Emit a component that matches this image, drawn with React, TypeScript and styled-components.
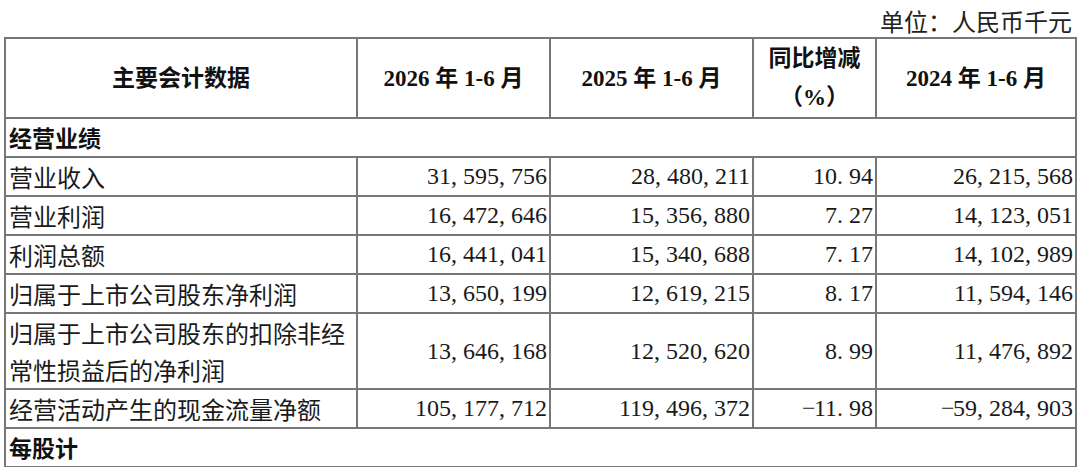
import React from "react";
import styled, { createGlobalStyle } from "styled-components";

const Global = createGlobalStyle`
  html, body { margin: 0; padding: 0; background: #fff; overflow: hidden; }
  body { font-family: "Noto Sans CJK SC", sans-serif; color: #111; }
`;

const Page = styled.div`
  width: 1071px;
  margin-left: 4px;
`;

const Unit = styled.div`
  padding-top: 5px;
  height: 32px;
  line-height: 32px;
  text-align: right;
  padding-right: 3px;
  font-size: 24px;
  color: #222;
  font-family: "Noto Sans CJK SC", sans-serif;
`;

const Table = styled.table`
  width: 1071px;
  table-layout: fixed;
  border-collapse: collapse;
  border: 2px solid #777;
`;

const HeadCell = styled.th`
  border: 2px solid #777;
  height: 78px;
  padding: 0;
  text-align: center;
  vertical-align: middle;
  font-size: 23px;
  font-weight: 700;
  line-height: 39px;
  font-family: "Liberation Serif", "Noto Sans CJK SC", serif;
  color: #111;
`;

const SectionCell = styled.td`
  border: 2px solid #777;
  padding: 0 0 0 3px;
  height: 37px;
  line-height: 37px;
  font-size: 23px;
  font-weight: 700;
  font-family: "Noto Sans CJK SC", sans-serif;
`;

const LabelCell = styled.td`
  border: 2px solid #777;
  padding: 0 0 0 3px;
  height: 37px;
  line-height: 37px;
  font-size: 24px;
  font-weight: 400;
  vertical-align: middle;
  font-family: "Noto Sans CJK SC", sans-serif;
  white-space: pre-line;
  color: #1a1a1a;
`;

const NumCell = styled.td`
  border: 2px solid #777;
  padding: 0 2px 0 0;
  line-height: 37px;
  font-size: 24px;
  text-align: right;
  vertical-align: middle;
  font-family: "Liberation Serif", serif;
  white-space: nowrap;
  color: #1a1a1a;
`;

const Sep = styled.span<{ $center?: boolean }>`
  display: inline-block;
  width: 0.5em;
  text-align: ${(p) => (p.$center ? "center" : "left")};
`;

const Num = ({ v }: { v: string }) => (
  <>
    {v.split(/([,.\-])/).map((p, i) =>
      p === "," || p === "." ? (
        <Sep key={i}>{p}</Sep>
      ) : p === "-" ? (
        <Sep key={i} $center>
          {"\u2212"}
        </Sep>
      ) : (
        <React.Fragment key={i}>{p}</React.Fragment>
      )
    )}
  </>
);

type Row = { label: string; vals: string[] };

const rows: Row[] = [
  { label: "营业收入", vals: ["31,595,756", "28,480,211", "10.94", "26,215,568"] },
  { label: "营业利润", vals: ["16,472,646", "15,356,880", "7.27", "14,123,051"] },
  { label: "利润总额", vals: ["16,441,041", "15,340,688", "7.17", "14,102,989"] },
  { label: "归属于上市公司股东净利润", vals: ["13,650,199", "12,619,215", "8.17", "11,594,146"] },
  {
    label: "归属于上市公司股东的扣除非经\n常性损益后的净利润",
    vals: ["13,646,168", "12,520,620", "8.99", "11,476,892"],
  },
  { label: "经营活动产生的现金流量净额", vals: ["105,177,712", "119,496,372", "-11.98", "-59,284,903"] },
];

const widths = [352, 193, 203, 123, 200];

export default function App() {
  return (
    <Page>
      <Global />
      <Unit>单位：人民币千元</Unit>
      <Table>
        <colgroup>
          {widths.map((w, i) => (
            <col key={i} style={{ width: w }} />
          ))}
        </colgroup>
        <thead>
          <tr>
            <HeadCell>主要会计数据</HeadCell>
            <HeadCell>2026 年 1-6 月</HeadCell>
            <HeadCell>2025 年 1-6 月</HeadCell>
            <HeadCell>
              同比增减
              <br />
              （%）
            </HeadCell>
            <HeadCell>2024 年 1-6 月</HeadCell>
          </tr>
        </thead>
        <tbody>
          <tr>
            <SectionCell colSpan={5}>经营业绩</SectionCell>
          </tr>
          {rows.map((r) => (
            <tr key={r.label}>
              <LabelCell>{r.label}</LabelCell>
              {r.vals.map((v, i) => (
                <NumCell key={i}>
                  <Num v={v} />
                </NumCell>
              ))}
            </tr>
          ))}
          <tr>
            <SectionCell colSpan={5}>每股计</SectionCell>
          </tr>
          <tr>
            <LabelCell />
            <NumCell />
            <NumCell />
            <NumCell />
            <NumCell />
          </tr>
        </tbody>
      </Table>
    </Page>
  );
}
